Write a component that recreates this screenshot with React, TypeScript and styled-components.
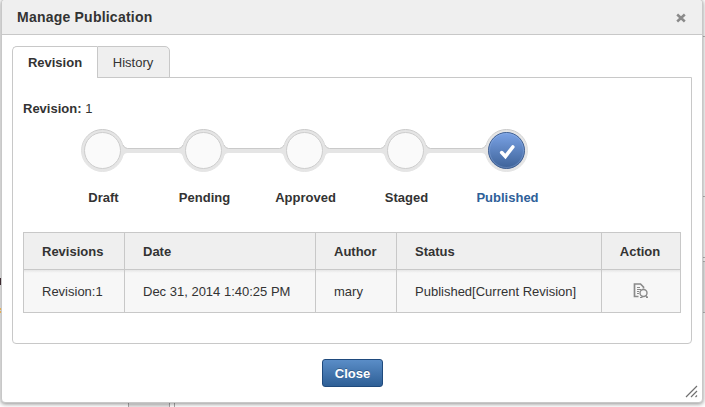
import React from "react";
import styled, { createGlobalStyle } from "styled-components";

const GlobalStyle = createGlobalStyle`
  * { box-sizing: border-box; }
  html, body { margin: 0; height: 100%; overflow: hidden; background: #fff; }
  body { font: 13px/20px "Liberation Sans", Arial, sans-serif; color: #333; }
`;

const Page = styled.div`
  position: relative;
  width: 705px;
  height: 407px;
  padding: 0 2px 0 1px;
  overflow: hidden;
  background: #fff;
`;

const Backdrop = styled.svg`
  position: absolute;
  inset: 0;
`;

const Dialog = styled.section`
  position: relative;
  display: flex;
  flex-direction: column;
  width: 702px;
  height: 404px;
  margin-top: -1px;
  background: #fff;
  border: 1px solid #c8c8c8;
  border-radius: 4px;
  box-shadow: 0 1px 4px rgba(0, 0, 0, 0.45);
`;

const Header = styled.header`
  display: flex;
  align-items: center;
  justify-content: space-between;
  flex: none;
  height: 35px;
  padding: 0 16px 0 15px;
  background: #efefef;
  border-bottom: 1px solid #c8c8c8;
  border-radius: 3px 3px 0 0;
`;

const Title = styled.h1`
  margin: 0;
  font-size: 14px;
  line-height: 20px;
  letter-spacing: 0.22px;
`;

const IconButton = styled.button`
  display: flex;
  padding: 1px 0 0;
  border: 0;
  background: none;
`;

const TabList = styled.div`
  display: flex;
  flex: none;
  height: 32px;
  margin: 11px 10px 0;
`;

const Tab = styled.button<{ $active?: boolean }>`
  width: ${(p) => (p.$active ? 85 : 73)}px;
  height: 32px;
  padding: ${(p) => (p.$active ? 0 : "2px 1px 0 0")};
  font: inherit;
  font-weight: ${(p) => (p.$active ? "bold" : "normal")};
  color: #333;
  background: ${(p) => (p.$active ? "#fff" : "#efefef")};
  border: 1px solid #c8c8c8;
  border-width: ${(p) => (p.$active ? "1px 0 0 1px" : "1px")};
  border-radius: ${(p) => (p.$active ? "5px 0 0 0" : "0 5px 0 0")};
  z-index: 1;
`;

const Panel = styled.div`
  flex: none;
  height: 267px;
  margin: -1px 10px 0;
  padding: 21px 10px 0;
  border: 1px solid #c8c8c8;
  border-radius: 0 0 4px 4px;
`;

const RevisionLine = styled.div`
  height: 20px;
`;

const Track = styled.svg`
  display: block;
  margin: 10px 0 0 58px;
`;

const StepLabels = styled.div`
  display: grid;
  grid-template-columns: repeat(5, 101px);
  margin: 15px 0 0 30px;
  text-align: center;
`;

const StepLabel = styled.strong<{ $current?: boolean }>`
  color: ${(p) => (p.$current ? "#2e6099" : "#333")};
`;

const Table = styled.div`
  margin-top: 24px;
  border: 1px solid #c8c8c8;
`;

const Row = styled.div<{ $head?: boolean }>`
  display: grid;
  grid-template-columns: 101px 191px 81px 205px 78px;
  align-items: stretch;
  height: ${(p) => (p.$head ? 37 : 42)}px;
  font-weight: ${(p) => (p.$head ? "bold" : "normal")};
  background: ${(p) =>
    p.$head ? "#efefef" : "linear-gradient(#e6e6e6, #f7f7f7 3px)"};
  border-bottom: ${(p) => (p.$head ? "1px solid #c8c8c8" : "0")};
`;

const Cell = styled.div<{ $center?: boolean; $icon?: boolean }>`
  display: flex;
  align-items: center;
  justify-content: ${(p) => (p.$center ? "center" : "flex-start")};
  padding: ${(p) => (p.$icon ? "0 1px 0 0" : p.$center ? "2px 2px 0 0" : "2px 0 0 18px")};
  border-right: 1px solid #c8c8c8;
  white-space: nowrap;
  &:last-child { border-right: 0; }
`;

const Footer = styled.footer`
  display: flex;
  justify-content: center;
  padding: 15px 0 0 1px;
`;

const CloseButton = styled.button`
  width: 61px;
  height: 28px;
  padding: 0;
  font: bold 13px "Liberation Sans", Arial, sans-serif;
  color: #fff;
  text-shadow: 0 -1px 0 rgba(0, 0, 0, 0.25);
  background: linear-gradient(#5a8dc7, #2e5f96);
  border: 1px solid #1f4a7d;
  border-radius: 3px;
`;

const ResizeGrip = styled.svg`
  position: absolute;
  right: 4px;
  bottom: 4px;
`;

const steps = ["Draft", "Pending", "Approved", "Staged", "Published"];
const centers = [21.5, 122.5, 223.5, 324.5, 425.5];

function StepTrack() {
  return (
    <Track width="450" height="44" viewBox="0 0 450 44">
      <defs>
        <linearGradient id="current" x1="0" y1="0" x2="0" y2="1">
          <stop offset="0" stopColor="#7ba3e6" />
          <stop offset="1" stopColor="#3d6298" />
        </linearGradient>
        <linearGradient id="ring" x1="0" y1="0" x2="0" y2="1">
          <stop offset="0" stopColor="#c9c9c9" />
          <stop offset="0.6" stopColor="#e4e4e4" />
        </linearGradient>
      </defs>
      {centers.map((c) => (
        <circle key={c} cx={c} cy="21.5" r="21" fill="#e5e5e5" stroke="url(#ring)" strokeWidth="1" />
      ))}
      {centers.slice(0, -1).map((c) => (
        <g key={c}>
          <path
            d={`M${c + 20} 15 Q${c + 21.5} 19 ${c + 25} 19 H${c + 76} Q${c + 79.5} 19 ${c + 81} 15 V28 Q${c + 79.5} 24 ${c + 76} 24 H${c + 25} Q${c + 21.5} 24 ${c + 20} 28 Z`}
            fill="#e5e5e5"
          />
          <path
            d={`M${c + 20.5} 16 Q${c + 22} 19.5 ${c + 25} 19.5 H${c + 76} Q${c + 79} 19.5 ${c + 80.5} 16`}
            fill="none"
            stroke="#cacaca"
          />
        </g>
      ))}
      {centers.map((c, i) =>
        i === 4 ? (
          <g key={c}>
            <circle cx={c} cy="21.5" r="18" fill="url(#current)" stroke="#3e5e91" />
            <circle cx={c} cy="21.5" r="17" fill="none" stroke="#a9c3ee" strokeOpacity="0.3" />
            <path d="M420.7 23.6L424.4 27.4L431.8 18" fill="none" stroke="#fff" strokeWidth="3.6" strokeLinecap="round" />
          </g>
        ) : (
          <circle key={c} cx={c} cy="21.5" r="18" fill="#fafafa" stroke="#cdcdcd" />
        )
      )}
    </Track>
  );
}

function PreviewIcon() {
  return (
    <svg width="16" height="16" viewBox="0 0 16 16" fill="none" stroke="#8a8a8a">
      <path d="M5.5 13.5H1.5V1H7.5L10.5 4V5.5" strokeWidth="1.7" />
      <path d="M4 4.5H7M4 6.5H8M4 8.5H6M4 10.5H6" />
      <circle cx="10.5" cy="10" r="3.5" strokeWidth="1.4" />
      <path d="M12.8 12.5L14.7 14.3M7 14.5H9.5M13 14.5H15" strokeWidth="1.1" />
    </svg>
  );
}

export default function App() {
  return (
    <Page>
      <GlobalStyle />
      <Backdrop width="705" height="407" aria-hidden="true">
        <path d="M128.5 400V407M169.5 400V407M174.5 400V407" stroke="#aaa" />
        <path d="M129 404H169V407H129Z" fill="#e9e9e9" />
        <path d="M702 36.5H705M702 196.5H705M702 257.5H705M702 261.5H705M702 312.5H705" stroke="#bbb" />
        <path d="M702 262H705V312H702Z" fill="#ededed" />
      </Backdrop>
      <Dialog>
        <Header>
          <Title>Manage Publication</Title>
          <IconButton aria-label="Close dialog">
            <svg width="10" height="10" viewBox="0 0 10 10">
              <path d="M1.2 1.5L8.8 8.5M8.8 1.5L1.2 8.5" stroke="#8a8a8a" strokeWidth="2.5" />
            </svg>
          </IconButton>
        </Header>
        <TabList>
          <Tab $active>Revision</Tab>
          <Tab>History</Tab>
        </TabList>
        <Panel>
          <RevisionLine><b>Revision:</b> 1</RevisionLine>
          <StepTrack />
          <StepLabels>
            {steps.map((s, i) => (
              <StepLabel key={s} $current={i === 4}>{s}</StepLabel>
            ))}
          </StepLabels>
          <Table>
            <Row $head>
              <Cell>Revisions</Cell>
              <Cell>Date</Cell>
              <Cell>Author</Cell>
              <Cell>Status</Cell>
              <Cell $center>Action</Cell>
            </Row>
            <Row>
              <Cell>Revision:1</Cell>
              <Cell>Dec 31, 2014 1:40:25 PM</Cell>
              <Cell>mary</Cell>
              <Cell>Published[Current Revision]</Cell>
              <Cell $center $icon><PreviewIcon /></Cell>
            </Row>
          </Table>
        </Panel>
        <Footer><CloseButton>Close</CloseButton></Footer>
        <ResizeGrip width="13" height="13" viewBox="0 0 13 13">
          <path d="M1 12L12 1M6 12L12 6M10.5 12L12 10.5" stroke="#707070" strokeWidth="1.2" />
        </ResizeGrip>
      </Dialog>
      <Backdrop width="705" height="407" aria-hidden="true">
        <path d="M0 278H1V285H0Z" fill="#3c2930" />
        <path d="M0 308H1V310H0ZM0 311H1V313H0Z" fill="#e3ad55" />
      </Backdrop>
    </Page>
  );
}
